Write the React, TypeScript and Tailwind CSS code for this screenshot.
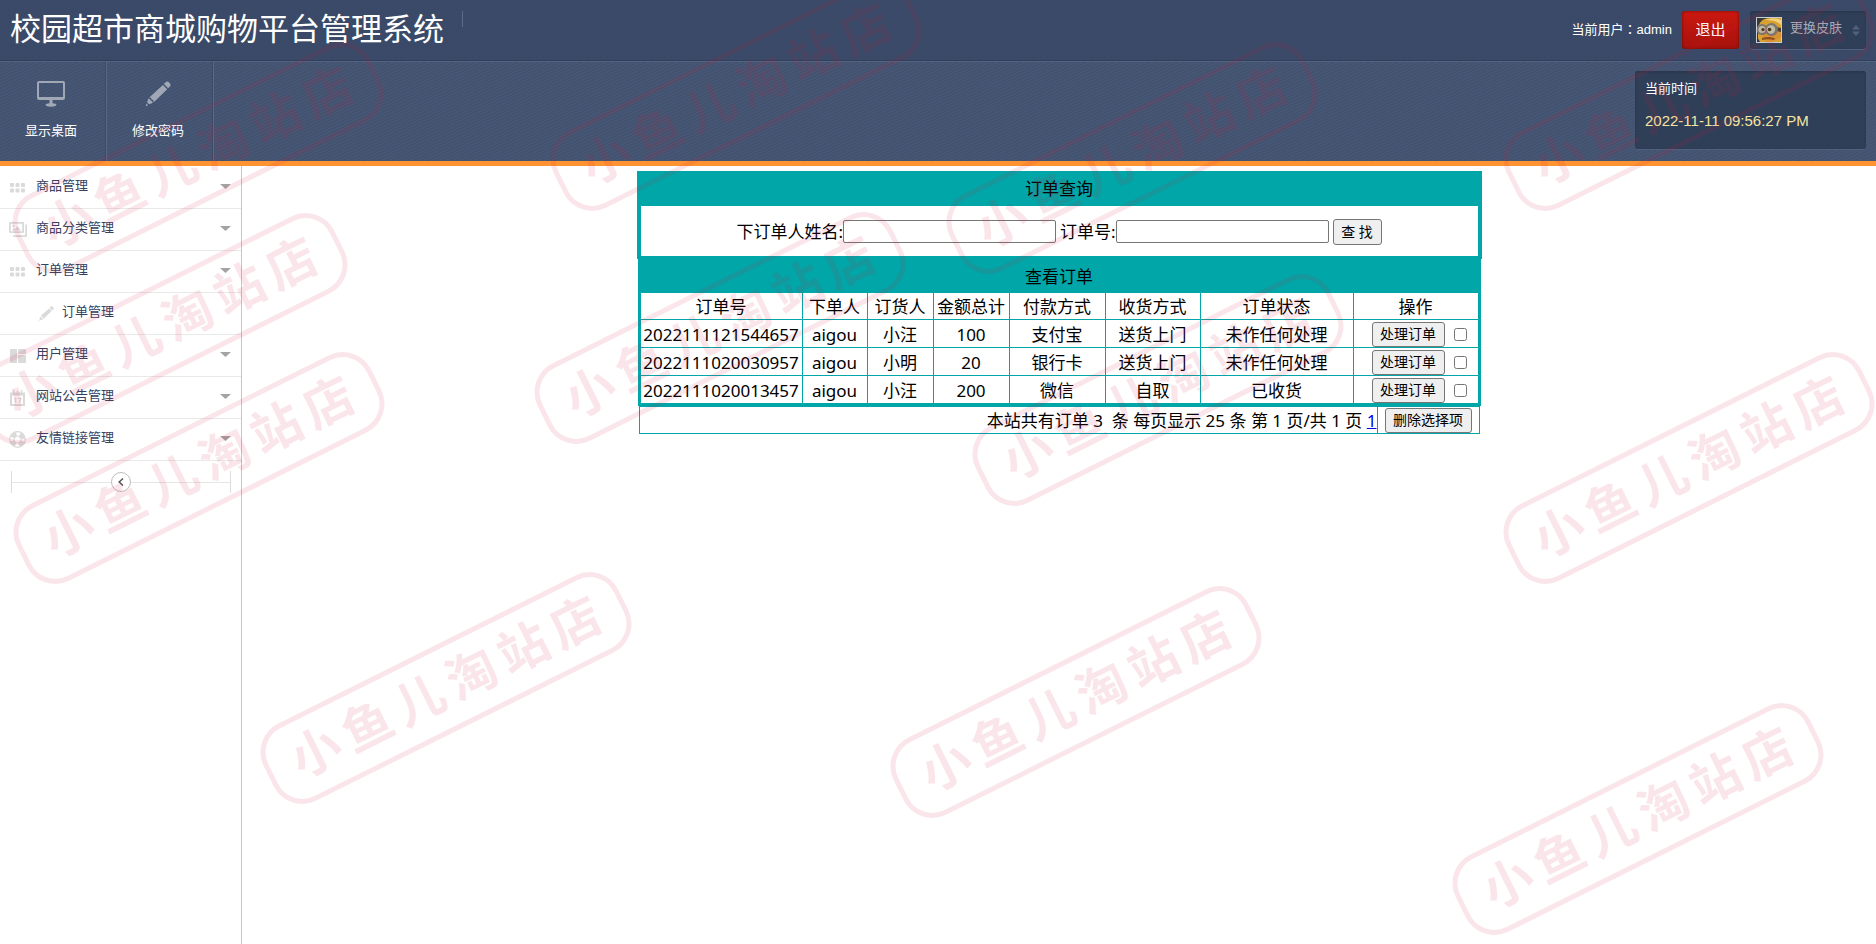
import type { ReactNode } from "react";

type Stamp = { x: number; y: number };

const stamps: Stamp[] = [
  { x: 736, y: 95 },
  { x: 1689, y: 95 },
  { x: 198, y: 158 },
  { x: 1132, y: 158 },
  { x: 162, y: 329 },
  { x: 720, y: 328 },
  { x: 1158, y: 390 },
  { x: 199, y: 468 },
  { x: 1689, y: 468 },
  { x: 446, y: 688 },
  { x: 1076, y: 702 },
  { x: 1638, y: 819 },
];

const orders = [
  { id: "2022111121544657", user: "aigou", buyer: "小汪", total: 100, pay: "支付宝", delivery: "送货上门", status: "未作任何处理" },
  { id: "2022111020030957", user: "aigou", buyer: "小明", total: 20, pay: "银行卡", delivery: "送货上门", status: "未作任何处理" },
  { id: "2022111020013457", user: "aigou", buyer: "小汪", total: 200, pay: "微信", delivery: "自取", status: "已收货" },
];

const MonitorIcon = () => (
  <svg viewBox="0 0 28 26" className="w-7 h-[26px]" fill="currentColor">
    <path
      fillRule="evenodd"
      d="M2 0h24a2 2 0 0 1 2 2v15a2 2 0 0 1-2 2H2a2 2 0 0 1-2-2V2a2 2 0 0 1 2-2zm0 2v14h24V2zM12.500 19h3v3.200c2.500.2 4 .8 4 1.600 0 1.200-2.500 2-5.500 2s-5.500-.8-5.500-2c0-.8 1.500-1.400 4-1.600z"
    />
  </svg>
);

const PencilIcon = ({ className }: { className: string }) => (
  <svg viewBox="0 0 26 26" className={className} fill="currentColor">
    <path d="M20.500 1.300a2.500 2.500 0 0 1 3.400 0l.9.9a2.500 2.500 0 0 1 0 3.400l-1.600 1.600-4.300-4.300zM17.900 3.900l4.300 4.300L8.800 21.200l-.6-2.200-1.700-.5-.4-1.800-1.800-.3zM3.400 17.500l1.500.5.5 1.600 1.700.5.600 1.800-3.700 1.300-1.900-1.900zM1.500 22.600l1.600 1.600L.6 25.200z" />
  </svg>
);

const GridIcon = () => (
  <svg viewBox="0 0 15 10" className="w-[15px] h-[10px]" fill="currentColor">
    {[0, 5.500, 11].map((x) => (
      <g key={x}>
        <rect x={x} y="0" width="4" height="4" rx="1" />
        <rect x={x} y="5.500" width="4" height="4" rx="1" />
      </g>
    ))}
  </svg>
);

const PicturesIcon = () => (
  <svg viewBox="0 0 18 15" className="w-[18px] h-[15px]" fill="currentColor">
    <path fillRule="evenodd" d="M1 0h13a1 1 0 0 1 1 1v9a1 1 0 0 1-1 1H1a1 1 0 0 1-1-1V1a1 1 0 0 1 1-1zm.8 1.800v7.400h11.400V1.800z" />
    <path d="M3 8.500l1.500-2.300 1.500 1 2.500-3 3.500 4.300zM3.500 3h1.800v1.800H3.500z" />
    <path d="M16.300 2.500H18V14a1 1 0 0 1-1 1H4v-1.800h12.300z" />
  </svg>
);

const BlocksIcon = () => (
  <svg viewBox="0 0 16 14" className="w-4 h-3.5" fill="currentColor">
    <rect x="0" y="0" width="7" height="14" rx="1" />
    <rect x="8" y="0" width="8" height="5" rx="1" />
    <rect x="8" y="6" width="8" height="8" rx="1" />
  </svg>
);

const CalendarIcon = () => (
  <svg viewBox="0 0 15 16" className="w-[15px] h-4" fill="none" stroke="currentColor">
    <path d="M1 3.500v11.500h13V3.500" strokeWidth="2" />
    <path d="M0 4h15" strokeWidth="3" />
    <path d="M3.500 0v3M11.500 0v3M7.500 1v2" strokeWidth="1.500" />
    <path d="M4.500 8.300h1.200v4.700M8 8.300h3L9.300 13" strokeWidth="1.200" />
  </svg>
);

const LifebuoyIcon = () => (
  <svg viewBox="0 0 17 17" className="size-[17px]" fill="none" stroke="currentColor">
    <circle cx="8.500" cy="8.500" r="7.800" strokeWidth="1.200" />
    <circle cx="8.500" cy="8.500" r="3.400" strokeWidth="1" />
    <circle cx="8.500" cy="8.500" r="5.500" strokeWidth="4.500" strokeDasharray="5.200 3.440" strokeDashoffset="-1.720" />
  </svg>
);

const Avatar = () => (
  <svg viewBox="0 0 26 26" className="w-[26px] h-[26px]">
    <rect width="26" height="26" fill="#3a3a38" />
    <path d="M2 26V11C3 5 7 1 14 1h12v25z" fill="#d9a032" />
    <path d="M9 3c5-2 12-2 16 0v5c-4-4-9-5-16-5z" fill="#efd27c" />
    <path d="M20 10l5 1v4l-5-1z" fill="#4c4234" />
    <circle cx="6" cy="12.500" r="5.500" fill="#7b776d" />
    <circle cx="15.500" cy="12.500" r="6.500" fill="#7b776d" />
    <circle cx="6" cy="12.500" r="3.500" fill="#c2bba3" />
    <circle cx="15" cy="12.500" r="4.200" fill="#c2bba3" />
    <circle cx="7" cy="12.500" r="1.600" fill="#4a3520" />
    <circle cx="13.500" cy="12.500" r="1.800" fill="#4a3520" />
    <path d="M6 21c4-1.500 9-1.500 13 .5l-1 1.500c-4-1-8-1-12 0z" fill="#8a561a" />
    <path d="M1 20l3 5H1z" fill="#2f3440" />
    <rect x=".5" y=".5" width="25" height="25" fill="none" stroke="#c9ced8" />
  </svg>
);

const menu: { label: string; icon: ReactNode; children?: string[] }[] = [
  { label: "商品管理", icon: <GridIcon /> },
  { label: "商品分类管理", icon: <PicturesIcon /> },
  { label: "订单管理", icon: <GridIcon />, children: ["订单管理"] },
  { label: "用户管理", icon: <BlocksIcon /> },
  { label: "网站公告管理", icon: <CalendarIcon /> },
  { label: "友情链接管理", icon: <LifebuoyIcon /> },
];

const Header = () => (
  <header className="border-b-[5px] border-[#ff9331] bg-[#435472] text-white text-[13px]">
    <div className="bg-[repeating-linear-gradient(155deg,rgba(255,255,255,0.02)_0px,rgba(255,255,255,0.02)_1px,rgba(0,0,0,0.02)_2px,rgba(0,0,0,0.02)_3px)]">
      <div className="flex h-[61px] items-start justify-between border-b border-[#2f3f5b] bg-[#374765]/80 pt-[11px] pr-2.5 pl-2.5">
        <div className="flex">
          <h1 className="pt-px text-[31px] leading-9">校园超市商城购物平台管理系统</h1>
          <span className="ml-[18px] h-4 w-px bg-[#5d6c87]" />
        </div>
        <div className="flex items-center">
          <span className="font-['Liberation_Sans','Noto_Sans_CJK_TC',sans-serif]">当前用户：admin</span>
          <button
            type="button"
            className="ml-2.5 h-[38px] w-[57px] rounded-[3px] bg-linear-to-b from-[#cb180f] to-[#a6120c] text-[15px] shadow-[inset_0_0_3px_#6d0a06]"
          >
            退出
          </button>
          <button
            type="button"
            aria-haspopup="menu"
            className="ml-[11px] flex h-[38px] w-[116px] items-center rounded-[3px] bg-[#303f58] pl-1.5 text-[#a8aebb] shadow-[inset_0_1px_3px_#273449,0_1px_0_#50617f]"
          >
            <Avatar />
            <span className="ml-2 pb-1 leading-5">更换皮肤</span>
            <svg viewBox="0 0 8 11" className="ml-2.5 h-[11px] w-2" fill="#50607d">
              <path d="M4 0l4 4.500H0zM4 11L0 6.500h8z" />
            </svg>
          </button>
        </div>
      </div>
      <div className="flex h-[100px] justify-between border-t border-[#536380] pr-2.5">
        <nav className="flex">
          <a
            href="#desktop"
            className="flex w-[107px] flex-col items-center border-r border-[#5a6a86] pt-[19px] pr-1 shadow-[inset_-1px_0_0_#3b4b67]"
          >
            <span className="text-[#a0a8b6]">
              <MonitorIcon />
            </span>
            <span className="mt-3.5 leading-5">显示桌面</span>
          </a>
          <a
            href="#password"
            className="flex w-[107px] flex-col items-center border-r border-[#5a6a86] pt-[19px] pr-1 shadow-[inset_-1px_0_0_#3b4b67]"
          >
            <span className="text-[#a0a8b6]">
              <PencilIcon className="size-[26px]" />
            </span>
            <span className="mt-3.5 leading-5">修改密码</span>
          </a>
        </nav>
        <div className="mt-[9px] h-[78px] w-[231px] rounded-[3px] bg-[#303f58] px-2.5 pt-2 shadow-[inset_0_1px_3px_#273449,0_1px_0_#50617f]">
          <p className="leading-5">当前时间</p>
          <p className="mt-3 text-[15px] leading-5 text-[#f6e4a2]">2022-11-11 09:56:27 PM</p>
        </div>
      </div>
    </div>
  </header>
);

const Sidebar = () => (
  <aside className="w-[242px] shrink-0 border-r border-[#c6c6c6] pt-px text-[13px] text-[#36415f]">
    <ul>
      {menu.map((item) => (
        <li key={item.label}>
          <a href="#menu" className="flex h-[42px] items-center border-b border-[#e9e9e9] pr-2.5 pb-1 pl-2">
            <span className="flex w-[19px] justify-center pt-1 text-[#dadada]">{item.icon}</span>
            <span className="ml-[9px] grow leading-5">{item.label}</span>
            <svg viewBox="0 0 11 5" className="mt-0.5 h-[5px] w-[11px]" fill="#a3a3a3">
              <path d="M0 0h11L5.500 5z" />
            </svg>
          </a>
          {item.children && (
            <ul>
              {item.children.map((child) => (
                <li key={child}>
                  <a href="#orders" className="flex h-[42px] items-center border-b border-[#e9e9e9] pb-1 pl-[38px]">
                    <span className="pt-1 text-[#dadada]">
                      <PencilIcon className="size-4" />
                    </span>
                    <span className="ml-2 leading-5">{child}</span>
                  </a>
                </li>
              ))}
            </ul>
          )}
        </li>
      ))}
    </ul>
    <div className="mr-2.5 ml-[11px] mt-2.5 flex h-[22px] items-center border-x border-[#dcdcdc]">
      <span className="h-px grow bg-[#e6e6e6]" />
      <button
        type="button"
        aria-label="收起"
        className="flex size-5 items-center justify-center rounded-full border border-[#bdbdbd] bg-white"
      >
        <svg viewBox="0 0 6 8" className="h-2 w-1.5" fill="none" stroke="#555" strokeWidth="1.500">
          <path d="M5 .5L1.200 4 5 7.500" />
        </svg>
      </button>
      <span className="h-px grow bg-[#e6e6e6]" />
    </div>
  </aside>
);

const Watermark = () => (
  <div aria-hidden className="pointer-events-none absolute inset-0 overflow-hidden">
    {stamps.map((s) => (
      <div
        key={`${s.x}-${s.y}`}
        style={{ left: s.x, top: s.y }}
        className="absolute flex h-[86px] w-[396px] -translate-x-1/2 -translate-y-1/2 -rotate-[26.5deg] items-center justify-center gap-2 rounded-[32px] border-[5px] border-[#d7193c] text-[50px] leading-none font-bold text-[#d7193c] opacity-10"
      >
        {[..."小鱼儿淘站店"].map((char) => (
          <span key={char}>{char}</span>
        ))}
      </div>
    ))}
  </div>
);

const App = () => {
  return (
    <div className="relative flex min-h-screen flex-col bg-white font-['Liberation_Sans','Noto_Sans_CJK_SC',sans-serif]">
      <Header />
      <div className="flex grow">
        <Sidebar />
        <main className="grow pt-[5px] font-['Noto_Sans','Noto_Sans_CJK_SC',sans-serif] text-[17px] leading-6 text-black">
          <form className="mx-auto w-[845px] max-w-full border-4 border-b-[3px] border-[#00a6a8]">
            <h2 className="flex h-[31px] items-center justify-center bg-[#00a6a8] pb-1">订单查询</h2>
            <div className="flex h-[50px] items-center justify-center pt-px">
              <label htmlFor="buyer">下订单人姓名:</label>
              <input id="buyer" type="text" className="h-[23px] w-[213px] rounded-[2px] border border-[#767676] px-1" />
              <label htmlFor="orderNo" className="ml-1">
                订单号:
              </label>
              <input id="orderNo" type="text" className="h-[23px] w-[213px] rounded-[2px] border border-[#767676] px-1" />
              <button
                type="submit"
                className="ml-1 h-[26px] w-[49px] rounded-[3px] border border-[#767676] bg-[#efefef] text-[14px] leading-5"
              >
                查 找
              </button>
            </div>
          </form>

          <table className="mx-auto w-[843px] max-w-full table-fixed border-separate border-spacing-px border-2 border-[#00a6a8] bg-[#00a6a8] text-center">
            <colgroup>
              <col className="w-[161px]" />
              <col className="w-16" />
              <col className="w-[65px]" />
              <col className="w-[75px]" />
              <col className="w-[95px]" />
              <col className="w-[94px]" />
              <col className="w-[152px]" />
              <col />
            </colgroup>
            <thead>
              <tr>
                <th colSpan={8} className="h-[30px] p-0 font-normal">
                  查看订单
                </th>
              </tr>
              <tr className="h-[26px] bg-white">
                <th className="p-0 pt-0.5 font-normal">订单号</th>
                <th className="p-0 pt-0.5 font-normal">下单人</th>
                <th className="p-0 pt-0.5 font-normal">订货人</th>
                <th className="p-0 pt-0.5 font-normal">金额总计</th>
                <th className="p-0 pt-0.5 font-normal">付款方式</th>
                <th className="p-0 pt-0.5 font-normal">收货方式</th>
                <th className="p-0 pt-0.5 font-normal">订单状态</th>
                <th className="p-0 pt-0.5 font-normal">操作</th>
              </tr>
            </thead>
            <tbody>
              {orders.map((order) => (
                <tr key={order.id} className="h-[27px] bg-white">
                  <td className="p-0 pt-0.5">{order.id}</td>
                  <td className="p-0 pt-0.5">{order.user}</td>
                  <td className="p-0 pt-0.5">{order.buyer}</td>
                  <td className="p-0 pt-0.5">{order.total}</td>
                  <td className="p-0 pt-0.5">{order.pay}</td>
                  <td className="p-0 pt-0.5">{order.delivery}</td>
                  <td className="p-0 pt-0.5">{order.status}</td>
                  <td className="p-0 pt-px">
                    <div className="flex items-center justify-end pr-[11px]">
                      <button
                        type="button"
                        className="h-[25px] w-[73px] rounded-[3px] border border-[#767676] bg-[#efefef] text-[14px] leading-5"
                      >
                        处理订单
                      </button>
                      <input type="checkbox" aria-label={order.id} className="ml-[9px] size-[13px]" />
                    </div>
                  </td>
                </tr>
              ))}
            </tbody>
          </table>

          <div className="mx-auto flex h-7 w-[841px] max-w-full border border-[#00a6a8]">
            <p className="grow border-r border-[#00a6a8] text-right leading-7 whitespace-pre">
              本站共有订单 3  条 每页显示 25 条 第 1 页/共 1 页{" "}
              <a href="#page-1" className="text-[#0000ee] underline">
                1
              </a>
            </p>
            <div className="flex w-[101px] items-center justify-center">
              <button
                type="button"
                className="h-[25px] w-[87px] rounded-[3px] border border-[#767676] bg-[#efefef] text-[14px] leading-5"
              >
                删除选择项
              </button>
            </div>
          </div>
        </main>
      </div>
      <Watermark />
    </div>
  );
};

export default App;
